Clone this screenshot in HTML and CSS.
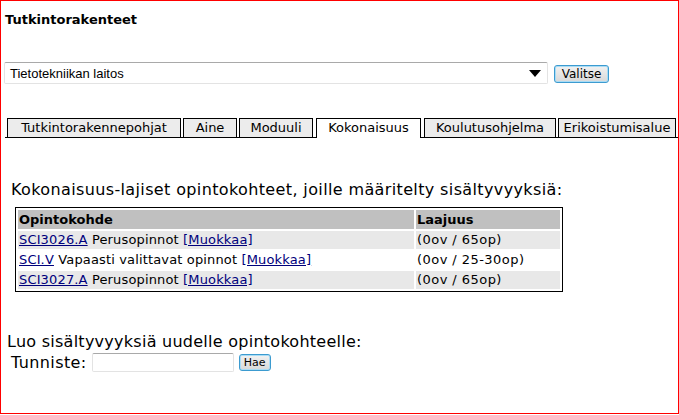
FILE: index.html
```html
<!DOCTYPE html>
<html>
<head>
<meta charset="utf-8">
<link rel="stylesheet" href="styles.css">
</head>
<body>
<div class="frame">
  <h1 class="title">Tutkintorakenteet</h1>
  <form class="pick">
    <div class="select">
      <span>Tietotekniikan laitos</span>
      <svg class="arrow" width="12" height="8" viewBox="0 0 12 8"><path d="M0 0H12L6 7Z" fill="#000"/></svg>
    </div>
    <button type="button" class="btn valitse">Valitse</button>
  </form>
  <div class="tabs">
    <span class="tab t1">Tutkintorakennepohjat</span>
    <span class="tab t2">Aine</span>
    <span class="tab t3">Moduuli</span>
    <span class="tab t4 active">Kokonaisuus</span>
    <span class="tab t5">Koulutusohjelma</span>
    <span class="tab t6">Erikoistumisalue</span>
  </div>
  <h2 class="heading">Kokonaisuus-lajiset opintokohteet, joille määritelty sisältyvyyksiä:</h2>
  <table class="list">
    <tr class="head"><th class="c1">Opintokohde</th><th class="c2">Laajuus</th></tr>
    <tr class="odd"><td><a href="#">SCI3026.A</a> Perusopinnot <a href="#">[Muokkaa]</a></td><td class="num">(0ov / 65op)</td></tr>
    <tr class="even"><td><a href="#">SCI.V</a> Vapaasti valittavat opinnot <a href="#">[Muokkaa]</a></td><td class="num">(0ov / 25-30op)</td></tr>
    <tr class="odd"><td><a href="#">SCI3027.A</a> Perusopinnot <a href="#">[Muokkaa]</a></td><td class="num">(0ov / 65op)</td></tr>
  </table>
  <h2 class="heading2">Luo sisältyvyyksiä uudelle opintokohteelle:</h2>
  <div class="search">
    <span class="label">Tunniste:</span>
    <span class="input"></span>
    <button type="button" class="btn hae">Hae</button>
  </div>
</div>
</body>
</html>
```
FILE: styles.css
```css
html, body { margin: 0; padding: 0; background: #fff; }
body { font-family: "DejaVu Sans", Verdana, sans-serif; color: #000; }
.frame {
  box-sizing: border-box;
  width: 679px;
  height: 414px;
  border: 1px solid #ff0000;
}
.title {
  font-size: 13px;
  font-weight: bold;
  letter-spacing: 0;
  margin: 11px 0 0 4px;
  line-height: 16px;
}
.pick {
  display: flex;
  align-items: center;
  margin: 34px 0 0 3px;
}
.select {
  box-sizing: border-box;
  width: 544px;
  height: 22px;
  border: 1px solid #e3e3e3;
  border-top-color: #a9a9a9;
  border-radius: 2px;
  display: flex;
  align-items: center;
  justify-content: space-between;
  padding: 0 6px 0 5px;
  font-family: "Liberation Sans", Arial, sans-serif;
  font-size: 13px;
}
.arrow { margin-top: 1px; }
.btn {
  font-family: "DejaVu Sans", Verdana, sans-serif;
  font-size: 11px;
  color: #000;
  background: linear-gradient(#f2f2f2, #d8d8d8);
  border: 1px solid #3c9bd0;
  border-radius: 3px;
  box-shadow: inset 0 0 0 1px #a9dcf5;
  padding: 0;
  margin: 0;
}
.valitse { width: 55px; height: 18px; margin-left: 6px; margin-top: 2px; font-size: 12px; }
.tabs {
  display: flex;
  gap: 2px;
  margin: 34px 0 0 4px;
  border-bottom: 1px solid #000;
  padding-left: 2px;
  height: 19px;
}
.tab {
  box-sizing: border-box;
  flex: none;
  height: 19px;
  border: 1px solid #000;
  border-bottom: none;
  background: #ececec;
  font-size: 13px;
  line-height: 17px;
  text-align: center;
  white-space: nowrap;
}
.t1 { width: 174px; }
.t2 { width: 54px; }
.t3 { width: 74px; }
.t4 { width: 105px; margin-left: 1px; }
.t5 { width: 132px; margin-left: 1px; }
.t6 { width: 118px; }
.tab.active {
  background: #fff;
  height: 20px;
  margin-bottom: -1px;
}
.heading {
  font-size: 16px;
  font-weight: normal;
  letter-spacing: 0.37px;
  margin: 42px 0 0 10px;
  line-height: 20px;
}
.list {
  margin: 7px 0 0 14px;
  border: 1px solid #000;
  border-spacing: 2px;
  width: 548px;
  font-size: 13px;
  letter-spacing: 0.15px;
}
.list th, .list td {
  text-align: left;
  padding: 0 1px;
  height: 18px;
  line-height: 18px;
  white-space: nowrap;
}
.list th { background: #c0c0c0; font-weight: bold; height: 19px; letter-spacing: 0; }
.list .c1 { width: 394px; }
.list .num { letter-spacing: 0.45px; }
.list .odd td { background: #e8e8e8; }
.list a { color: #00007c; text-decoration: underline; }
.heading2 {
  font-size: 16px;
  font-weight: normal;
  letter-spacing: 0.26px;
  margin: 40px 0 0 6px;
  line-height: 20px;
}
.search {
  display: flex;
  align-items: center;
  margin: 1px 0 0 10px;
  font-size: 16px;
  letter-spacing: 0.4px;
}
.label { margin-right: 5px; }
.input {
  box-sizing: border-box;
  width: 142px;
  height: 19px;
  border: 1px solid #e3e3e3;
  border-top-color: #a9a9a9;
  border-radius: 2px;
}
.hae { width: 32px; height: 17px; margin-left: 5px; font-size: 11px; letter-spacing: 0; }
```
